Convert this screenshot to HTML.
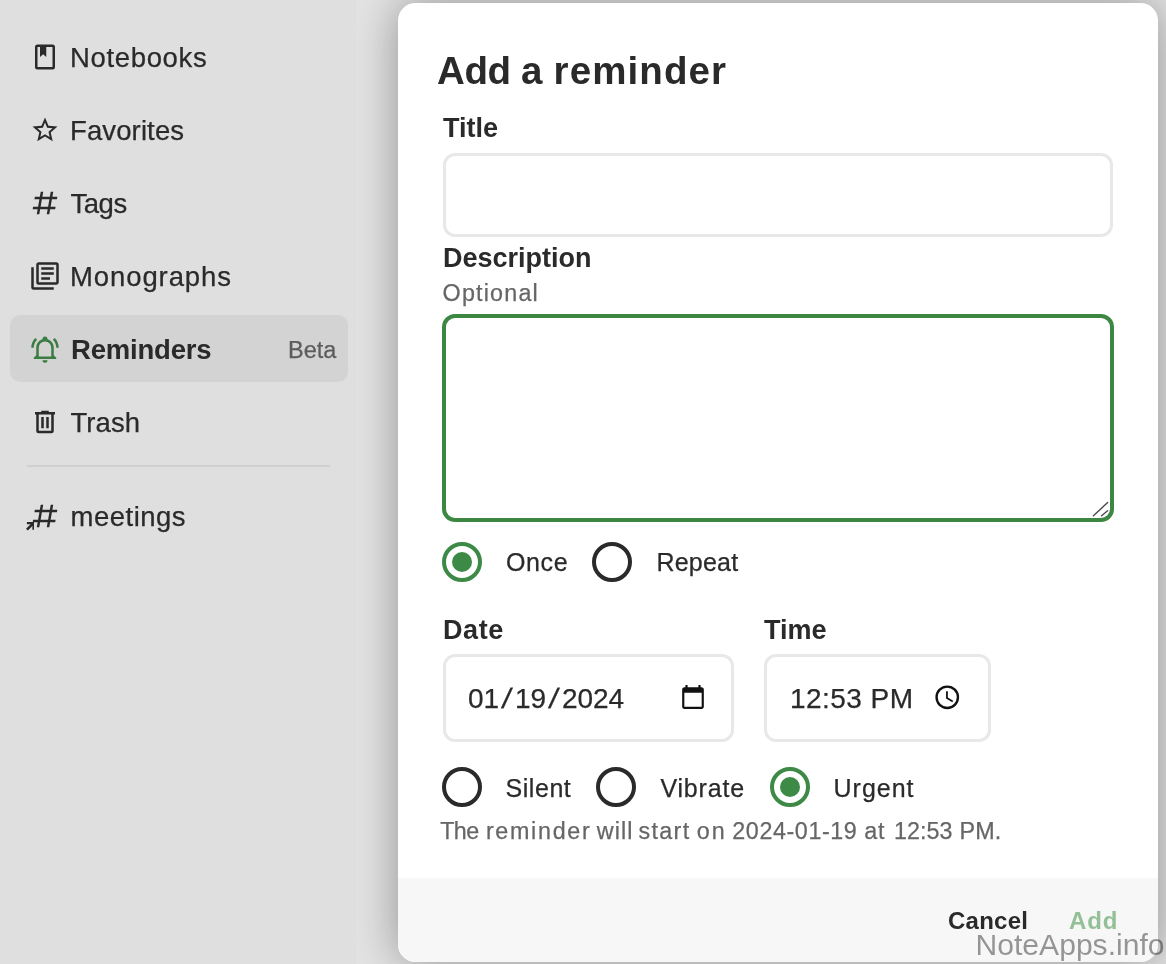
<!DOCTYPE html>
<html lang="en">
<head>
<meta charset="utf-8">
<title>Add a reminder</title>
<style>
  html, body { margin: 0; padding: 0; }
  body {
    width: 1166px; height: 964px; overflow: hidden; position: relative;
    background: #e3e3e3;
    font-family: "Liberation Sans", sans-serif;
    color: #2a2a2a;
  }
  .abs { position: absolute; }
  .t { position: absolute; white-space: nowrap; line-height: 1; will-change: opacity; -webkit-text-stroke: 0.25px currentColor; }
  #sidebar { position: absolute; left: 0; top: 0; width: 356px; height: 964px; background: #dfdfdf; z-index: 3; }
  #sel { position: absolute; left: 10px; top: 315px; width: 338px; height: 67px; border-radius: 10px; background: #d3d3d3; }
  .nav { font-size: 27.5px; left: 71px; }
  .ico { position: absolute; width: 30px; height: 30px; left: 30px; }
  .ico svg { display: block; width: 100%; height: 100%; fill: #2a2a2a; }
  #divider { position: absolute; left: 27px; top: 465px; width: 303px; height: 2px; background: #d0d0d0; }
  #dialog {
    position: absolute; left: 398px; top: 3px; width: 760px; height: 959px;
    background: #fff; border-radius: 17.5px; z-index: 2;
    box-shadow: 0 0 46px rgba(0,0,0,0.36);
  }
  #footer { position: absolute; left: 0; top: 875px; width: 760px; height: 84px; background: #f7f7f7; border-radius: 0 0 17.5px 17.5px; }
  .lbl { font-weight: 700; font-size: 27px; -webkit-text-stroke: 0; }
  .box { position: absolute; box-sizing: border-box; border: 3px solid #e8e8e8; border-radius: 12px; background: #fff; }
  .radio { position: absolute; box-sizing: border-box; width: 40px; height: 40px; border-radius: 50%; border: 4px solid #2a2a2a; }
  .radio.on { border-color: #3c8a46; }
  .radio.on::after { content: ""; position: absolute; left: 6px; top: 6px; width: 20px; height: 20px; border-radius: 50%; background: #3c8a46; }
  .rl { font-size: 25px; }
  .sl { display: inline-block; margin: 0 4px; transform: skewX(-9deg) scaleX(1.12); }
  #wm { -webkit-text-stroke: 0; font-size: 30.1px; color: rgba(0,0,0,0.4); z-index: 10; }
</style>
</head>
<body>

<div id="sidebar">
  <div id="sel"></div>
  <!-- icons -->
  <div class="ico" style="top:42px"><svg viewBox="0 0 24 24"><path d="M18,2A2,2 0 0,1 20,4V20A2,2 0 0,1 18,22H6A2,2 0 0,1 4,20V4A2,2 0 0,1 6,2H18M18,4H13V12L10.5,9.75L8,12V4H6V20H18V4Z"/></svg></div>
  <div class="ico" style="top:115px"><svg viewBox="0 0 24 24"><path d="M12,15.39L8.24,17.66L9.23,13.38L5.91,10.5L10.29,10.13L12,6.09L13.71,10.13L18.09,10.5L14.77,13.38L15.76,17.66M22,9.24L14.81,8.63L12,2L9.19,8.63L2,9.24L7.45,13.97L5.82,21L12,17.27L18.18,21L16.54,13.97L22,9.24Z"/></svg></div>
  <div class="ico" style="top:188px"><svg viewBox="0 0 24 24"><path d="M5.41,21L6.12,17H2.12L2.47,15H6.47L7.53,9H3.53L3.88,7H7.88L8.59,3H10.59L9.88,7H15.88L16.59,3H18.59L17.88,7H21.88L21.53,9H17.53L16.47,15H20.47L20.12,17H16.12L15.41,21H13.41L14.12,17H8.12L7.41,21H5.41M9.53,9L8.47,15H14.47L15.53,9H9.53Z"/></svg></div>
  <div class="ico" style="top:261px"><svg viewBox="0 0 24 24"><path d="M16,15H9V13H16V15M19,11H9V9H19V11M19,7H9V5H19V7M3,5V21H19V23H3A2,2 0 0,1 1,21V5H3M21,1A2,2 0 0,1 23,3V17C23,18.11 22.11,19 21,19H7A2,2 0 0,1 5,17V3C5,1.89 5.89,1 7,1H21M7,3V17H21V3H7Z"/></svg></div>
  <div class="ico" style="top:334px"><svg viewBox="0 0 24 24" style="fill:#3a7c42"><path d="M10,21H14A2,2 0 0,1 12,23A2,2 0 0,1 10,21M21,19V20H3V19L5,17V11C5,7.9 7.03,5.17 10,4.29C10,4.19 10,4.1 10,4A2,2 0 0,1 12,2A2,2 0 0,1 14,4C14,4.1 14,4.19 14,4.29C16.97,5.17 19,7.9 19,11V17L21,19M17,11A5,5 0 0,0 12,6A5,5 0 0,0 7,11V18H17V11M19.75,3.19L18.33,4.61C20.04,6.3 21,8.6 21,11H23C23,8.07 21.84,5.25 19.75,3.19M1,11H3C3,8.6 3.96,6.3 5.67,4.61L4.25,3.19C2.16,5.25 1,8.07 1,11Z"/></svg></div>
  <div class="ico" style="top:407px"><svg viewBox="0 0 24 24"><path d="M9,3V4H4V6H5V19A2,2 0 0,0 7,21H17A2,2 0 0,0 19,19V6H20V4H15V3H9M7,6H17V19H7V6M9,8V17H11V8H9M13,8V17H15V8H13Z"/></svg></div>
  <div class="ico" style="top:501.2px"><svg viewBox="0 0 24 24"><path d="M5.41,21L6.12,17H2.12L2.47,15H6.47L7.53,9H3.53L3.88,7H7.88L8.59,3H10.59L9.88,7H15.88L16.59,3H18.59L17.88,7H21.88L21.53,9H17.53L16.47,15H20.47L20.12,17H16.12L15.41,21H13.41L14.12,17H8.12L7.41,21H5.41M9.53,9L8.47,15H14.47L15.53,9H9.53Z"/></svg></div>
  <div class="ico" style="top:522px;left:25.6px;width:8.6px;height:8.6px"><svg viewBox="0 0 14 14"><path d="M1.5,0V3.6H7.5L0,11L3,14L10.4,6.5V12.5H14V0Z"/></svg></div>

  <div class="t nav" style="top:43.6px;left:70px;letter-spacing:0.65px">Notebooks</div>
  <div class="t nav" style="top:116.5px;left:70px;letter-spacing:0.12px">Favorites</div>
  <div class="t nav" style="top:189.6px;left:70.4px;letter-spacing:-0.45px">Tags</div>
  <div class="t nav" style="top:262.5px;left:70px;letter-spacing:0.9px">Monographs</div>
  <div class="t nav" style="top:335.7px;left:71px;font-weight:700;letter-spacing:-0.2px;-webkit-text-stroke:0">Reminders</div>
  <div class="t" style="top:338.8px;left:288px;font-size:23.5px;color:#5c5c5c">Beta</div>
  <div class="t nav" style="top:408.6px;left:70.4px;letter-spacing:0.1px">Trash</div>
  <div id="divider"></div>
  <div class="t nav" style="top:503.3px;left:70.5px;letter-spacing:0.5px">meetings</div>
</div>

<div id="dialog">
  <div class="t" style="left:0;top:48.7px;width:400px;height:40px;font-size:38.5px;font-weight:700;-webkit-text-stroke:0"><span style="position:absolute;left:39.1px;top:0;letter-spacing:-0.45px">Add</span> <span style="position:absolute;left:123.1px;top:0">a</span> <span style="position:absolute;left:155.6px;top:0;letter-spacing:1.1px">reminder</span></div>
  <div class="t lbl" style="left:45px;top:112px">Title</div>
  <div class="box" style="left:45px;top:150px;width:670px;height:84px"></div>
  <div class="t lbl" style="left:45px;top:241.9px">Description</div>
  <div class="t" style="left:44.6px;top:278.7px;font-size:23.3px;color:#666;letter-spacing:1.2px">Optional</div>
  <div class="box" style="left:44px;top:311px;width:672px;height:208px;border:4px solid #3c8843;border-radius:13px"></div>
  <svg class="abs" style="left:690px;top:495px" width="24" height="24" viewBox="0 0 24 24"><path d="M5.4,17.8L19.6,4.6M13.6,17.8L19.6,12.7" stroke="#4a4a4a" stroke-width="1.4" stroke-linecap="round" fill="none"/></svg>

  <div class="radio on" style="left:44px;top:539px"></div>
  <div class="t rl" style="left:108px;top:547.3px;letter-spacing:0.6px">Once</div>
  <div class="radio" style="left:194px;top:539px"></div>
  <div class="t rl" style="left:258.5px;top:547.3px;letter-spacing:0.2px">Repeat</div>

  <div class="t lbl" style="left:45px;top:613.5px;letter-spacing:0.6px">Date</div>
  <div class="t lbl" style="left:366px;top:613.5px">Time</div>
  <div class="box" style="left:45px;top:651px;width:291px;height:88px"></div>
  <div class="box" style="left:366px;top:651px;width:227px;height:88px"></div>
  <div class="t" style="left:70px;top:682px;font-size:28px;word-spacing:0">01<span class="sl">/</span>19<span class="sl">/</span>2024</div>
  <div class="t" style="left:392px;top:682px;font-size:28px;letter-spacing:0.45px">12:53 PM</div>
  <svg class="abs" style="left:281.8px;top:680.9px" width="26" height="26" viewBox="0 0 24 24"><path fill="#111" d="M20 3h-1V1h-2v2H7V1H5v2H4c-1.1 0-2 .9-2 2v16c0 1.1.9 2 2 2h16c1.1 0 2-.9 2-2V5c0-1.1-.9-2-2-2zm0 18H4V8h16v13z"/></svg>
  <svg class="abs" style="left:535.3px;top:680.1px" width="28.5" height="28.5" viewBox="0 0 24 24"><path fill="#111" d="M12,20A8,8 0 0,0 20,12A8,8 0 0,0 12,4A8,8 0 0,0 4,12A8,8 0 0,0 12,20M12,2A10,10 0 0,1 22,12A10,10 0 0,1 12,22C6.47,22 2,17.5 2,12A10,10 0 0,1 12,2M12.5,7V12.25L17,14.92L16.25,16.15L11,13V7H12.5Z"/></svg>

  <div class="radio" style="left:44px;top:764px"></div>
  <div class="t rl" style="left:107.5px;top:772.5px;letter-spacing:0.55px">Silent</div>
  <div class="radio" style="left:198px;top:764px"></div>
  <div class="t rl" style="left:262.4px;top:772.5px;letter-spacing:0.85px">Vibrate</div>
  <div class="radio on" style="left:372px;top:764px"></div>
  <div class="t rl" style="left:435.5px;top:772.5px;letter-spacing:1px">Urgent</div>

  <div class="t" style="left:40px;top:816.8px;width:570px;height:24px;font-size:23.3px;color:#666"><span style="position:absolute;left:2.2px;top:0;letter-spacing:-0.55px">The</span> <span style="position:absolute;left:47.9px;top:0;letter-spacing:1.7px">reminder</span> <span style="position:absolute;left:158.8px;top:0;letter-spacing:1.13px">will</span> <span style="position:absolute;left:200.4px;top:0;letter-spacing:1.38px">start</span> <span style="position:absolute;left:258.7px;top:0;letter-spacing:2px">on</span> <span style="position:absolute;left:294.3px;top:0;letter-spacing:0.59px">2024-01-19</span> <span style="position:absolute;left:426.2px;top:0;letter-spacing:0.8px">at</span> <span style="position:absolute;left:455.9px;top:0;letter-spacing:0.08px">12:53</span> <span style="position:absolute;left:521.4px;top:0;letter-spacing:0.25px">PM.</span></div>

  <div id="footer"></div>
  <div class="t" style="left:550px;top:906.3px;font-size:24px;font-weight:700;letter-spacing:0.25px;-webkit-text-stroke:0">Cancel</div>
  <div class="t" style="left:671px;top:906.3px;font-size:24px;font-weight:700;color:#93c096;letter-spacing:0.9px;-webkit-text-stroke:0">Add</div>
</div>

<div id="wm" class="t" style="left:975.5px;top:929.7px">NoteApps.info</div>

</body>
</html>
